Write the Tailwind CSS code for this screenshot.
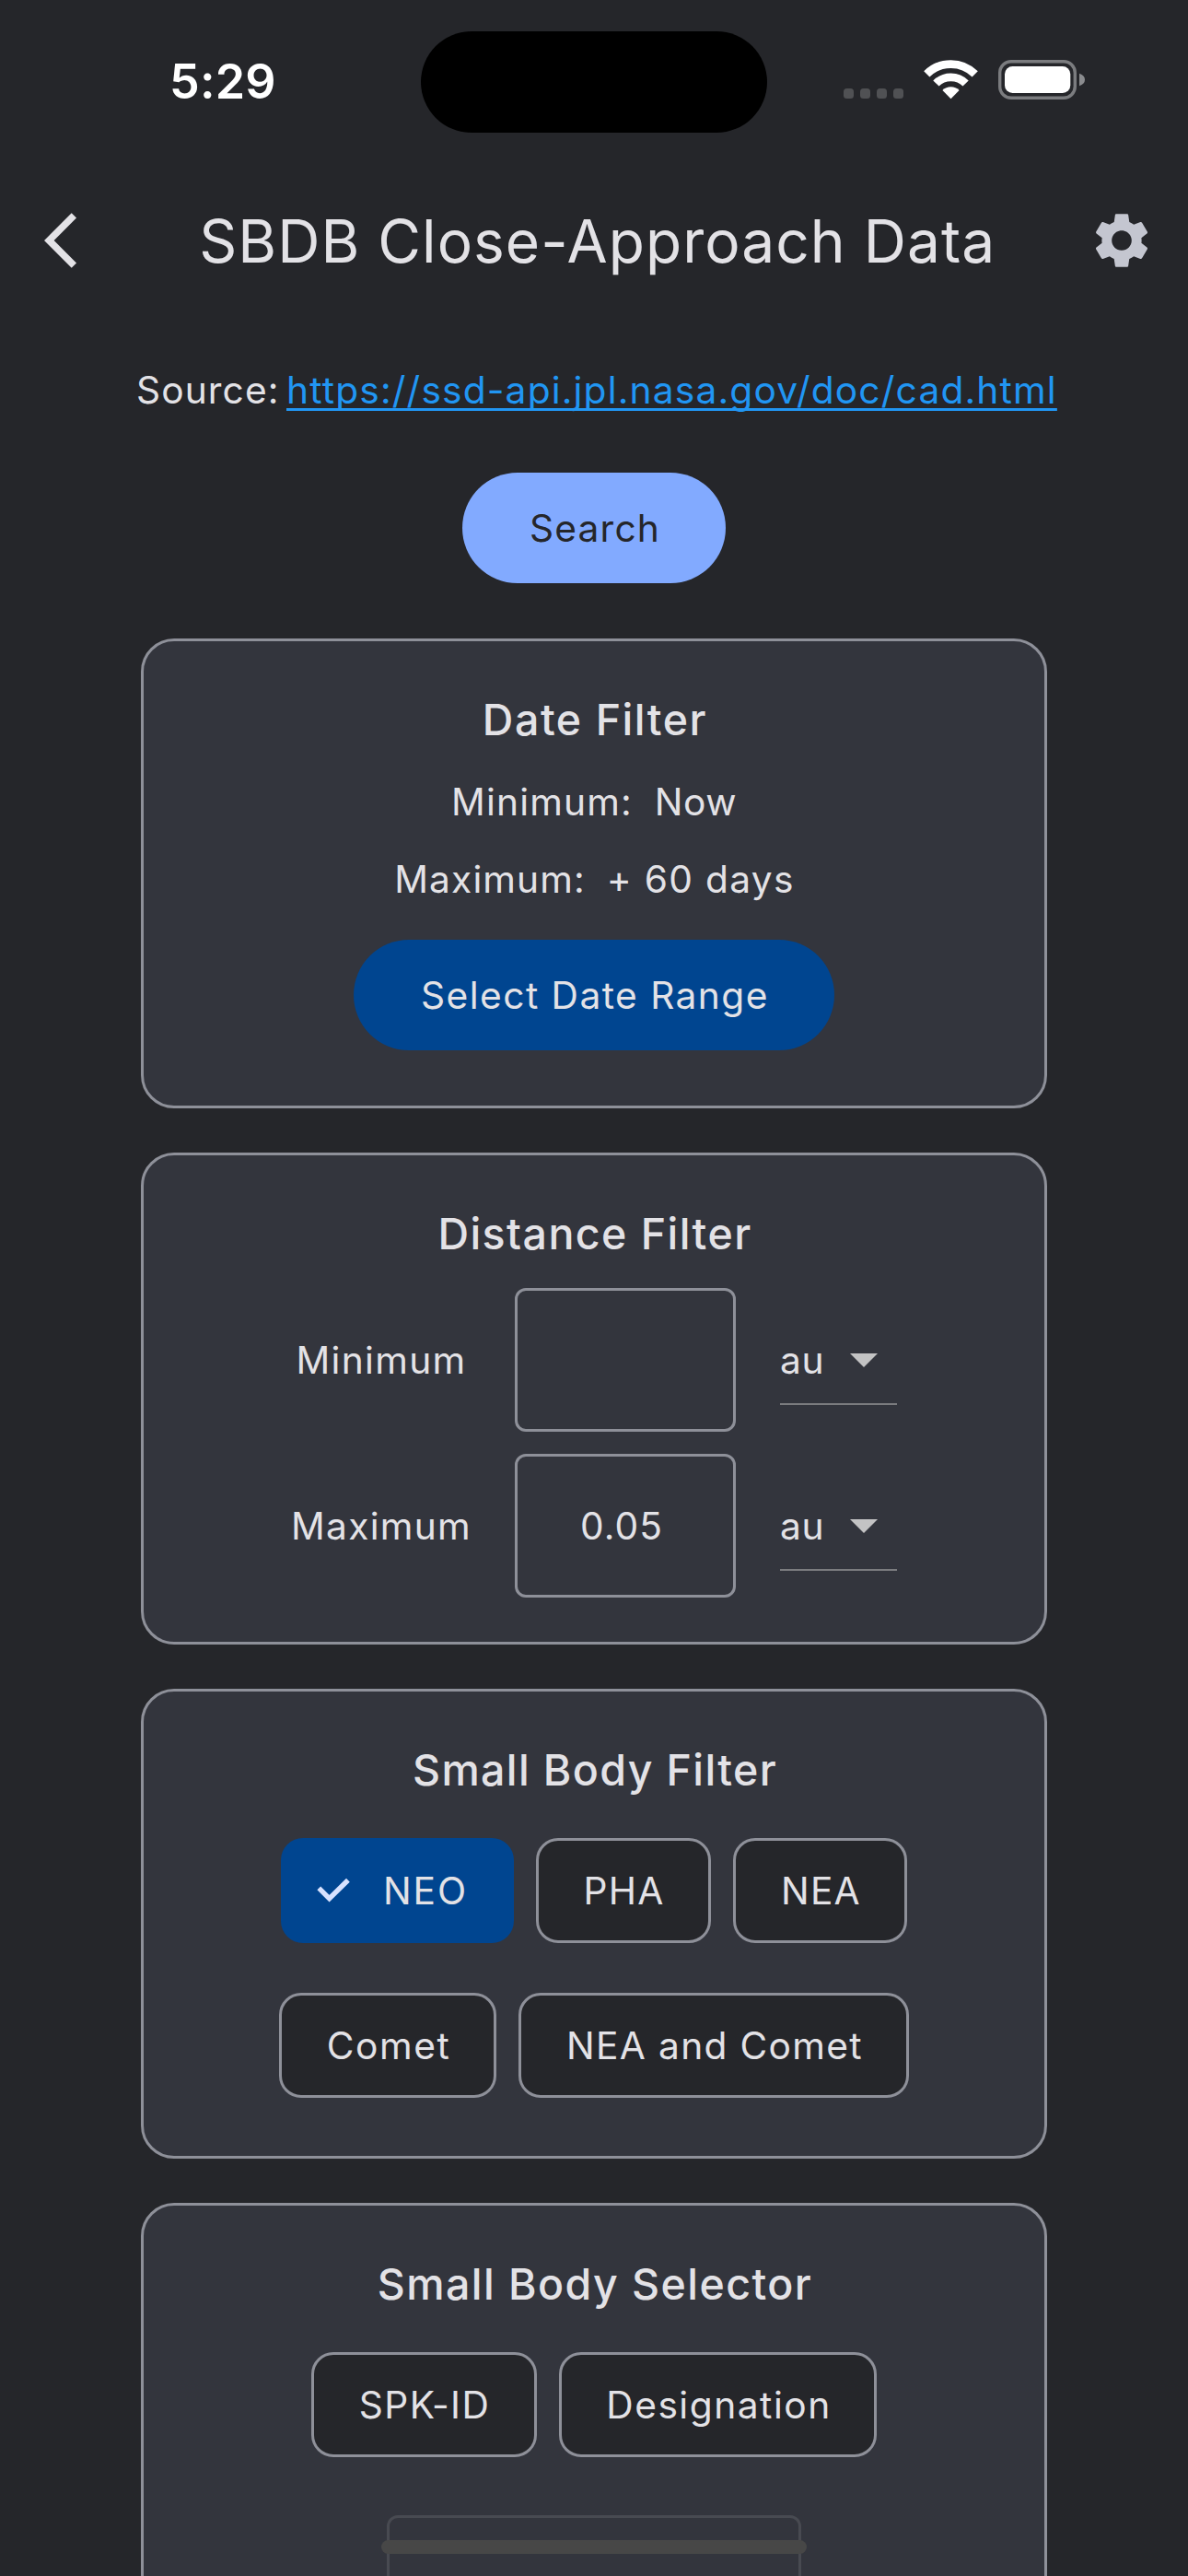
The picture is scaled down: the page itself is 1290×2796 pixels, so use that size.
<!DOCTYPE html>
<html lang="en">
<head>
<meta charset="utf-8">
<title>SBDB Close-Approach Data</title>
<script src="https://cdn.jsdelivr.net/npm/@tailwindcss/browser@4"></script>
</head>
<body class="relative h-[2796px] w-[1290px] overflow-hidden bg-[#25262a] font-[Inter,sans-serif] text-[40.7px] leading-[60px] tracking-[1.2px] text-[#e3e2e6]">

  <!-- Status bar -->
  <div class="flex h-[177px] w-full">
    <div class="w-[457px] pt-[59px] pl-[184px] text-[52px] font-semibold tracking-[0.2px] text-white">5:29</div>
    <div class="mt-[34px] h-[110px] w-[376px] rounded-full bg-black"></div>
    <svg class="mt-[60px] ml-[83px] h-[50px] w-[264px]" viewBox="916 60 264 50">
      <g fill="#505154">
        <rect x="916" y="96" width="11" height="11" rx="3.5"/>
        <rect x="934" y="96" width="11" height="11" rx="3.5"/>
        <rect x="952" y="96" width="11" height="11" rx="3.5"/>
        <rect x="970" y="96" width="11" height="11" rx="3.5"/>
      </g>
      <g fill="none" stroke="#fff">
        <path stroke-width="8.8" d="M1006.3 80.4A37 37 0 0 1 1058.7 80.4"/>
        <path stroke-width="8.8" d="M1016.4 90.5A22.7 22.7 0 0 1 1048.6 90.5"/>
      </g>
      <path fill="#fff" d="M1032.5 107.2L1023.4 98A13 13 0 0 1 1041.6 98Z"/>
      <rect x="1085.7" y="66.7" width="81.6" height="39.6" rx="12.3" fill="none" stroke="#7b7c7f" stroke-width="3.4"/>
      <rect x="1091" y="72" width="71.3" height="29" rx="8.5" fill="#fff"/>
      <path fill="#8a8b8e" d="M1172 79.8Q1178 82 1178 86.5Q1178 91 1172 93.3Z"/>
    </svg>
  </div>

  <!-- App bar -->
  <header class="flex h-[168px] items-center">
    <svg class="ml-[48px] size-[72px] shrink-0" viewBox="0 0 24 24" fill="#e3e2e6"><path d="M11.67 3.87L9.9 2.1 0 12l9.9 9.9 1.77-1.77L3.54 12z"/></svg>
    <h1 class="ml-[96.2px] w-[965.8px] pt-px text-[64px] font-normal leading-[80px] tracking-[1.03px] whitespace-nowrap">SBDB Close-Approach Data</h1>
    <svg class="size-[72px] shrink-0" viewBox="0 0 24 24" fill="#c4c6d0"><path d="M19.14 12.94c.04-.3.06-.61.06-.94 0-.32-.02-.64-.07-.94l2.03-1.58c.18-.14.23-.41.12-.61l-1.92-3.32c-.12-.22-.37-.29-.59-.22l-2.39.96c-.5-.38-1.03-.7-1.62-.94l-.36-2.54c-.04-.24-.24-.41-.48-.41h-3.84c-.24 0-.43.17-.47.41l-.36 2.54c-.59.24-1.13.57-1.62.94l-2.39-.96c-.22-.08-.47 0-.59.22L2.74 8.87c-.12.21-.08.47.12.61l2.03 1.58c-.05.3-.09.63-.09.94s.02.64.07.94l-2.03 1.58c-.18.14-.23.41-.12.61l1.92 3.32c.12.22.37.29.59.22l2.39-.96c.5.38 1.03.7 1.62.94l.36 2.54c.05.24.24.41.48.41h3.84c.24 0 .44-.17.47-.41l.36-2.54c.59-.24 1.13-.56 1.62-.94l2.39.96c.22.08.47 0 .59-.22l1.92-3.32c.12-.22.07-.47-.12-.61l-2.01-1.58zM12 15.6c-1.98 0-3.6-1.62-3.6-3.6s1.62-3.6 3.6-3.6 3.6 1.62 3.6 3.6-1.62 3.6-3.6 3.6z"/></svg>
  </header>

  <main class="flex flex-col items-center">
    <div class="mt-[49px] flex w-full pl-[148px] whitespace-nowrap">
      <span class="w-[163px] tracking-[1.1px]">Source:</span>
      <a class="tracking-[1.16px] text-[#2196f3] underline decoration-[3px] underline-offset-[5px] [text-decoration-skip-ink:none]">https://ssd-api.jpl.nasa.gov/doc/cad.html</a>
    </div>

    <button class="mt-[59px] h-[120px] w-[286px] rounded-full bg-[#82aaff] pt-[2px] pl-[2px] text-[#25262a]">Search</button>

    <!-- Date filter -->
    <section class="mt-[60px] flex h-[510px] w-[984px] flex-col items-center rounded-[36px] border-3 border-[#8e9099] bg-[#33353d] pt-[55px]">
      <h2 class="pl-[2px] text-[46.5px] font-medium tracking-[1.55px]">Date Filter</h2>
      <div class="mt-[30px] flex gap-[24px]"><span class="tracking-[1.15px]">Minimum:</span><span class="tracking-[0.5px]">Now</span></div>
      <div class="mt-[24px] flex gap-[23px] pl-px"><span class="tracking-[1.1px]">Maximum:</span><span class="tracking-[1.3px]">+ 60 days</span></div>
      <button class="mt-[35px] h-[120px] w-[522px] rounded-full bg-[#004590] pt-[2px] pl-[2px] tracking-[1.45px]">Select Date Range</button>
    </section>

    <!-- Distance filter -->
    <section class="mt-[48px] h-[534px] w-[984px] rounded-[36px] border-3 border-[#8e9099] bg-[#33353d] pt-[55px]">
      <h2 class="pl-[2px] text-center text-[46.5px] font-medium tracking-[1.45px]">Distance Filter</h2>
      <div class="mt-[29px] flex flex-col gap-[24px]">
        <div class="flex h-[156px] items-center pl-[112px]">
          <span class="w-[291px] pt-[2px] pl-px text-center tracking-[1.3px]">Minimum</span>
          <div class="h-[156px] w-[240px] rounded-[12px] border-3 border-[#8e9099]"></div>
          <div class="ml-[48px] flex h-[98px] w-[127px] items-center justify-between border-b-2 border-[#7b7c7f] pt-[2px] pr-[21px]">
            <span class="pt-[2px] tracking-[0.7px]">au</span>
            <svg class="h-[15px] w-[30px]" viewBox="0 0 30 15" fill="#c3c3c4"><path d="M0 0H30L15 15Z"/></svg>
          </div>
        </div>
        <div class="flex h-[156px] items-center pl-[112px]">
          <span class="w-[291px] pt-[2px] pl-px text-center tracking-[1.3px]">Maximum</span>
          <div class="flex h-[156px] w-[240px] items-center justify-center rounded-[12px] border-3 border-[#8e9099] pt-[2px] pr-[8px] tracking-[1.1px]">0.05</div>
          <div class="ml-[48px] flex h-[98px] w-[127px] items-center justify-between border-b-2 border-[#7b7c7f] pt-[2px] pr-[21px]">
            <span class="pt-[2px] tracking-[0.7px]">au</span>
            <svg class="h-[15px] w-[30px]" viewBox="0 0 30 15" fill="#c3c3c4"><path d="M0 0H30L15 15Z"/></svg>
          </div>
        </div>
      </div>
    </section>

    <!-- Small body filter -->
    <section class="mt-[48px] flex h-[510px] w-[984px] flex-col items-center rounded-[36px] border-3 border-[#8e9099] bg-[#33353d] pt-[55px]">
      <h2 class="pl-[2px] text-[46.5px] font-medium tracking-[1.38px]">Small Body Filter</h2>
      <div class="mt-[44px] flex gap-[24px]">
        <div class="flex h-[114px] w-[253px] items-center rounded-[24px] bg-[#004590] pl-[39px]">
          <svg class="h-[28px] w-[36px]" viewBox="344 2038 36 28" fill="none" stroke="#d8e2ff" stroke-width="5.4"><path d="M346.3 2049.3L357.6 2060.6L377.9 2040.8"/></svg>
          <span class="pt-[2px] pl-[36px] tracking-[1.9px]">NEO</span>
        </div>
        <div class="flex h-[114px] w-[190px] items-center justify-center rounded-[24px] border-3 border-[#8e9099] bg-[#25262a] pt-[2px] pl-px">PHA</div>
        <div class="flex h-[114px] w-[189px] items-center justify-center rounded-[24px] border-3 border-[#8e9099] bg-[#25262a] pt-[2px] pl-[2px]">NEA</div>
      </div>
      <div class="mt-[54px] flex gap-[24px]">
        <div class="flex h-[114px] w-[236px] items-center justify-center rounded-[24px] border-3 border-[#8e9099] bg-[#25262a] pt-[2px] pl-[2px] tracking-[1.55px]">Comet</div>
        <div class="flex h-[114px] w-[424px] items-center justify-center rounded-[24px] border-3 border-[#8e9099] bg-[#25262a] pt-[2px] pl-[2px] tracking-[1.33px]">NEA and Comet</div>
      </div>
    </section>

    <!-- Small body selector -->
    <section class="mt-[48px] flex h-[510px] w-[984px] shrink-0 flex-col items-center rounded-[36px] border-3 border-[#8e9099] bg-[#33353d] pt-[55px]">
      <h2 class="pl-[2px] text-[46.5px] font-medium tracking-[1.45px]">Small Body Selector</h2>
      <div class="mt-[44px] flex gap-[24px]">
        <div class="flex h-[114px] w-[245px] items-center justify-center rounded-[24px] border-3 border-[#8e9099] bg-[#25262a] pt-[2px] pl-px tracking-[1.4px]">SPK-ID</div>
        <div class="flex h-[114px] w-[345px] items-center justify-center rounded-[24px] border-3 border-[#8e9099] bg-[#25262a] pt-[2px] pl-[2px] tracking-[1.5px]">Designation</div>
      </div>
      <div class="mt-[63px] h-[156px] w-[450px] rounded-[12px] border-3 border-[#484a51]"></div>
    </section>
  </main>

  <!-- Home indicator -->
  <div class="absolute top-[2757px] left-[414px] h-[15px] w-[462px] rounded-full bg-[#474747]"></div>
</body>
</html>
